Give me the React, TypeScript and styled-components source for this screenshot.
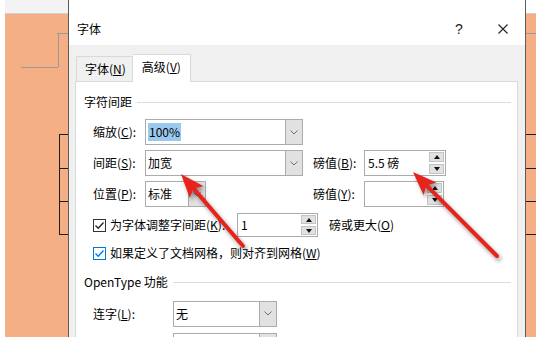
import React from "react";
import styled, { createGlobalStyle } from "styled-components";

const GlobalStyle = createGlobalStyle`
  html, body { margin: 0; padding: 0; background: #ffffff; }
  body {
    font-family: "Noto Sans CJK SC", "Microsoft YaHei", sans-serif;
    font-size: 12px;
    color: #000;
  }
  * { box-sizing: border-box; }
`;

const ORANGE = "#f4b084";

const Page = styled.div`
  position: relative;
  width: 536px;
  height: 337px;
  overflow: hidden;
  display: flex;
  background: #fff;
`;

const DocStrip = styled.div<{ $side: "left" | "right" }>`
  width: ${(p) => (p.$side === "left" ? "68px" : "10px")};
  flex: none;
  display: flex;
  flex-direction: column;
  padding-left: ${(p) => (p.$side === "left" ? "5px" : "0")};
  background: #fff;
`;

const DocTop = styled.div<{ $tint: boolean }>`
  height: 14px;
  flex: none;
  background: ${(p) => (p.$tint ? "#f3f3f3" : "#ffffff")};
  border-bottom: 1px solid #cfcfcf;
`;

const DocSheet = styled.div`
  flex: 1;
  background: ${ORANGE};
  position: relative;
  svg { display: block; }
`;

const Dialog = styled.div`
  width: 458px;
  flex: none;
  display: flex;
  flex-direction: column;
  border-left: 1px solid #5c5c5c;
  border-right: 1px solid #5c5c5c;
  background: #f0f0f0;
`;

const TitleBar = styled.div`
  height: 45px;
  flex: none;
  background: #fff;
  display: flex;
  align-items: flex-start;
  padding: 21px 0 0 8px;
  line-height: 16px;
`;

const Title = styled.div`
  flex: 1;
  font-size: 12px;
`;

const TitleButton = styled.div<{ $w: number; $ml?: number; $mr?: number }>`
  width: ${(p) => p.$w}px;
  height: 16px;
  margin-left: ${(p) => p.$ml ?? 0}px;
  margin-right: ${(p) => p.$mr ?? 0}px;
  display: flex;
  align-items: center;
  justify-content: center;
  font-family: "Liberation Sans", "DejaVu Sans", sans-serif;
  font-size: 14px;
  color: #222;
`;

const DialogBody = styled.div`
  flex: 1;
  padding: 9px 7px 0 6px;
  display: flex;
  flex-direction: column;
`;

const TabList = styled.div`
  display: flex;
  align-items: flex-end;
  padding-left: 1px;
  position: relative;
  z-index: 1;
  margin-bottom: -1px;
`;

const Tab = styled.div<{ $active?: boolean }>`
  height: ${(p) => (p.$active ? "28px" : "26px")};
  padding: ${(p) => (p.$active ? "4px 9px 0 9px" : "4px 6px 0 8px")};
  border: 1px solid #d9d9d9;
  border-bottom: ${(p) => (p.$active ? "none" : "1px solid #d9d9d9")};
  border-left: ${(p) => (p.$active ? "none" : "1px solid #d9d9d9")};
  background: ${(p) => (p.$active ? "#fff" : "#f0f0f0")};
  line-height: 16px;
  white-space: nowrap;
`;

const TabPanel = styled.div`
  flex: 1;
  background: #fff;
  border: 1px solid #d9d9d9;
  border-bottom: none;
  padding: 12px 6px 0 8px;
  display: flex;
  flex-direction: column;
`;

const GroupHeading = styled.div<{ $top?: number }>`
  display: flex;
  align-items: center;
  line-height: 16px;
  margin-top: ${(p) => p.$top ?? 0}px;
  white-space: nowrap;
  &::after {
    content: "";
    flex: 1;
    height: 1px;
    background: #dcdcdc;
    margin-left: 5px;
  }
`;

const SpacingGrid = styled.div`
  display: grid;
  grid-template-columns: 52px 158px 10px 51px 82px;
  grid-auto-rows: 26px;
  row-gap: 5px;
  margin: 9px 0 0 9px;
  align-items: center;
`;

const Label = styled.div<{ $col?: number }>`
  grid-column: ${(p) => p.$col ?? 1};
  line-height: 16px;
  white-space: nowrap;
`;

const U = styled.span`
  text-decoration: underline;
  text-underline-offset: 1px;
`;

const ComboBox = styled.div<{ $w?: number; $col?: number }>`
  grid-column: ${(p) => p.$col ?? 2};
  width: ${(p) => (p.$w ? `${p.$w}px` : "100%")};
  height: 26px;
  border: 1px solid #ababab;
  background: #fff;
  display: flex;
  align-items: stretch;
`;

const ComboText = styled.div`
  flex: 1;
  display: flex;
  align-items: center;
  padding-left: 2px;
  line-height: 16px;
  white-space: nowrap;
`;

const Selected = styled.span`
  background: #99c9ef;
  padding: 1px 1px;
`;

const DropButton = styled.div`
  width: 17px;
  flex: none;
  background: #e1e1e1;
  border-left: 1px solid #ababab;
  display: flex;
  align-items: center;
  justify-content: center;
`;

const Spinner = styled.div<{ $w: number; $h?: number; $col?: number }>`
  grid-column: ${(p) => p.$col ?? "auto"};
  width: ${(p) => p.$w}px;
  height: ${(p) => p.$h ?? 26}px;
  border: 1px solid #ababab;
  background: #fff;
  display: flex;
  align-items: stretch;
  flex: none;
`;

const SpinText = styled.div`
  flex: 1;
  display: flex;
  align-items: center;
  padding-left: 3px;
  line-height: 16px;
`;

const SpinButtons = styled.div`
  width: 16px;
  flex: none;
  display: flex;
  flex-direction: column;
  gap: 2px;
  padding: 1px 1px 1px 0;
`;

const SpinButton = styled.div`
  flex: 1;
  background: #e1e1e1;
  border: 1px solid #c4c4c4;
  display: flex;
  align-items: center;
  justify-content: center;
`;

const CheckRow = styled.div<{ $top: number }>`
  display: flex;
  align-items: center;
  margin: ${(p) => p.$top}px 0 0 9px;
  height: 24px;
  line-height: 16px;
  white-space: nowrap;
`;

const CheckBox = styled.div<{ $focus?: boolean }>`
  width: 13px;
  height: 13px;
  flex: none;
  border: 1px solid ${(p) => (p.$focus ? "#0078d7" : "#333")};
  background: #fff;
  margin-right: 4px;
  display: flex;
  align-items: center;
  justify-content: center;
`;

const CheckLabel = styled.span`
  width: 127px;
`;

const AfterText = styled.span`
  margin-left: 11px;
`;

const LigatureRow = styled.div`
  display: grid;
  grid-template-columns: 80px 104px;
  grid-auto-rows: 27px;
  row-gap: 5px;
  margin: 10px 0 0 9px;
  align-items: center;
`;

const ArrowLayer = styled.svg`
  position: absolute;
  left: 0;
  top: 0;
  pointer-events: none;
  filter: drop-shadow(2px 3px 2px rgba(0, 0, 0, 0.4));
`;

const Chevron = () => (
  <svg width="8" height="5" viewBox="0 0 8 5">
    <polyline points="0.5,0.5 4,4 7.5,0.5" fill="none" stroke="#707070" strokeWidth="1" />
  </svg>
);

const Tri = ({ up }: { up: boolean }) => (
  <svg width="6" height="4" viewBox="0 0 6 4">
    <polygon points={up ? "0,4 6,4 3,0" : "0,0 6,0 3,4"} fill="#111" />
  </svg>
);

const Check = ({ color }: { color: string }) => (
  <svg width="11" height="11" viewBox="0 0 11 11">
    <polyline points="1.5,5.5 4.2,8.3 9.5,2.5" fill="none" stroke={color} strokeWidth="1.3" />
  </svg>
);

const Combo = ({ children, w, col }: { children?: React.ReactNode; w?: number; col?: number }) => (
  <ComboBox $w={w} $col={col}>
    <ComboText>{children}</ComboText>
    <DropButton>
      <Chevron />
    </DropButton>
  </ComboBox>
);

const Spin = ({ children, w, h, col }: { children?: React.ReactNode; w: number; h?: number; col?: number }) => (
  <Spinner $w={w} $h={h} $col={col}>
    <SpinText>{children}</SpinText>
    <SpinButtons>
      <SpinButton>
        <Tri up />
      </SpinButton>
      <SpinButton>
        <Tri up={false} />
      </SpinButton>
    </SpinButtons>
  </Spinner>
);

type Pt = [number, number];

const Arrow = ({ tail, tip }: { tail: Pt; tip: Pt }) => {
  const dx = tip[0] - tail[0];
  const dy = tip[1] - tail[1];
  const len = Math.hypot(dx, dy);
  const ux = dx / len;
  const uy = dy / len;
  const nx = -uy;
  const ny = ux;
  const L = 24;
  const W = 9;
  const bx = tip[0] - ux * L;
  const by = tip[1] - uy * L;
  const nbx = tip[0] - ux * (L - 5);
  const nby = tip[1] - uy * (L - 5);
  const pts = [
    [tip[0], tip[1]],
    [bx + nx * W, by + ny * W],
    [nbx, nby],
    [bx - nx * W, by - ny * W],
  ]
    .map((p) => p.map((v) => v.toFixed(1)).join(","))
    .join(" ");
  return (
    <g>
      <line x1={tail[0]} y1={tail[1]} x2={nbx} y2={nby} stroke="#e8231b" strokeWidth="4" strokeLinecap="round" />
      <polygon points={pts} fill="#e8231b" />
    </g>
  );
};

const LeftMarks = () => (
  <svg width="63" height="323" viewBox="5 14 63 323">
    <g stroke="#9a9a9a" strokeWidth="1" fill="none" shapeRendering="crispEdges">
      <line x1="57" y1="33.5" x2="68" y2="33.5" />
      <line x1="58.5" y1="33" x2="58.5" y2="67" />
      <line x1="21" y1="67.5" x2="58" y2="67.5" />
    </g>
    <g stroke="#1e1e1e" strokeWidth="1" fill="none" shapeRendering="crispEdges">
      <line x1="59.5" y1="134" x2="59.5" y2="235" />
      <line x1="59" y1="134.5" x2="68" y2="134.5" />
      <line x1="59" y1="168.5" x2="68" y2="168.5" />
      <line x1="59" y1="201.5" x2="68" y2="201.5" />
      <line x1="59" y1="234.5" x2="68" y2="234.5" />
    </g>
  </svg>
);

const RightMarks = () => (
  <svg width="10" height="323" viewBox="526 14 10 323">
    <g stroke="#9a9a9a" strokeWidth="1" fill="none" shapeRendering="crispEdges">
      <line x1="526" y1="33.5" x2="536" y2="33.5" />
    </g>
    <g stroke="#1e1e1e" strokeWidth="1" fill="none" shapeRendering="crispEdges">
      <line x1="526" y1="134.5" x2="536" y2="134.5" />
      <line x1="526" y1="168.5" x2="536" y2="168.5" />
      <line x1="526" y1="201.5" x2="536" y2="201.5" />
      <line x1="526" y1="234.5" x2="536" y2="234.5" />
    </g>
  </svg>
);

export default function App() {
  return (
    <>
      <GlobalStyle />
      <Page>
        <DocStrip $side="left">
          <DocTop $tint />
          <DocSheet>
            <LeftMarks />
          </DocSheet>
        </DocStrip>

        <Dialog>
          <TitleBar>
            <Title>字体</Title>
            <TitleButton $w={16}>?</TitleButton>
            <TitleButton $w={28} $ml={22} $mr={8}>
              <svg width="10" height="10" viewBox="0 0 10 10">
                <path d="M0.5 0.5 L9.5 9.5 M9.5 0.5 L0.5 9.5" stroke="#222" strokeWidth="1.1" />
              </svg>
            </TitleButton>
          </TitleBar>

          <DialogBody>
            <TabList>
              <Tab>
                字体(<U>N</U>)
              </Tab>
              <Tab $active>
                高级(<U>V</U>)
              </Tab>
            </TabList>

            <TabPanel>
              <GroupHeading>字符间距</GroupHeading>

              <SpacingGrid>
                <Label>
                  缩放(<U>C</U>):
                </Label>
                <Combo>
                  <Selected>100%</Selected>
                </Combo>

                <Label>
                  间距(<U>S</U>):
                </Label>
                <Combo>加宽</Combo>
                <Label $col={4}>
                  磅值(<U>B</U>):
                </Label>
                <Spin w={82} col={5}>
                  5.5 磅
                </Spin>

                <Label>
                  位置(<U>P</U>):
                </Label>
                <Combo w={61}>标准</Combo>
                <Label $col={4}>
                  磅值(<U>Y</U>):
                </Label>
                <Spin w={80} col={5} />
              </SpacingGrid>

              <CheckRow $top={6}>
                <CheckBox>
                  <Check color="#222" />
                </CheckBox>
                <CheckLabel>
                  为字体调整字间距(<U>K</U>):
                </CheckLabel>
                <Spin w={81} h={24}>
                  1
                </Spin>
                <AfterText>
                  磅或更大(<U>O</U>)
                </AfterText>
              </CheckRow>

              <CheckRow $top={4}>
                <CheckBox $focus>
                  <Check color="#0078d7" />
                </CheckBox>
                <span>
                  如果定义了文档网格，则对齐到网格(<U>W</U>)
                </span>
              </CheckRow>

              <GroupHeading $top={9}>OpenType 功能</GroupHeading>

              <LigatureRow>
                <Label>
                  连字(<U>L</U>):
                </Label>
                <Combo>无</Combo>
                <Label />
                <Combo />
              </LigatureRow>
            </TabPanel>
          </DialogBody>
        </Dialog>

        <DocStrip $side="right">
          <DocTop $tint={false} />
          <DocSheet>
            <RightMarks />
          </DocSheet>
        </DocStrip>

        <ArrowLayer width="536" height="337" viewBox="0 0 536 337">
          <Arrow tail={[243, 246]} tip={[181, 174]} />
          <Arrow tail={[497, 256]} tip={[413, 172]} />
        </ArrowLayer>
      </Page>
    </>
  );
}
